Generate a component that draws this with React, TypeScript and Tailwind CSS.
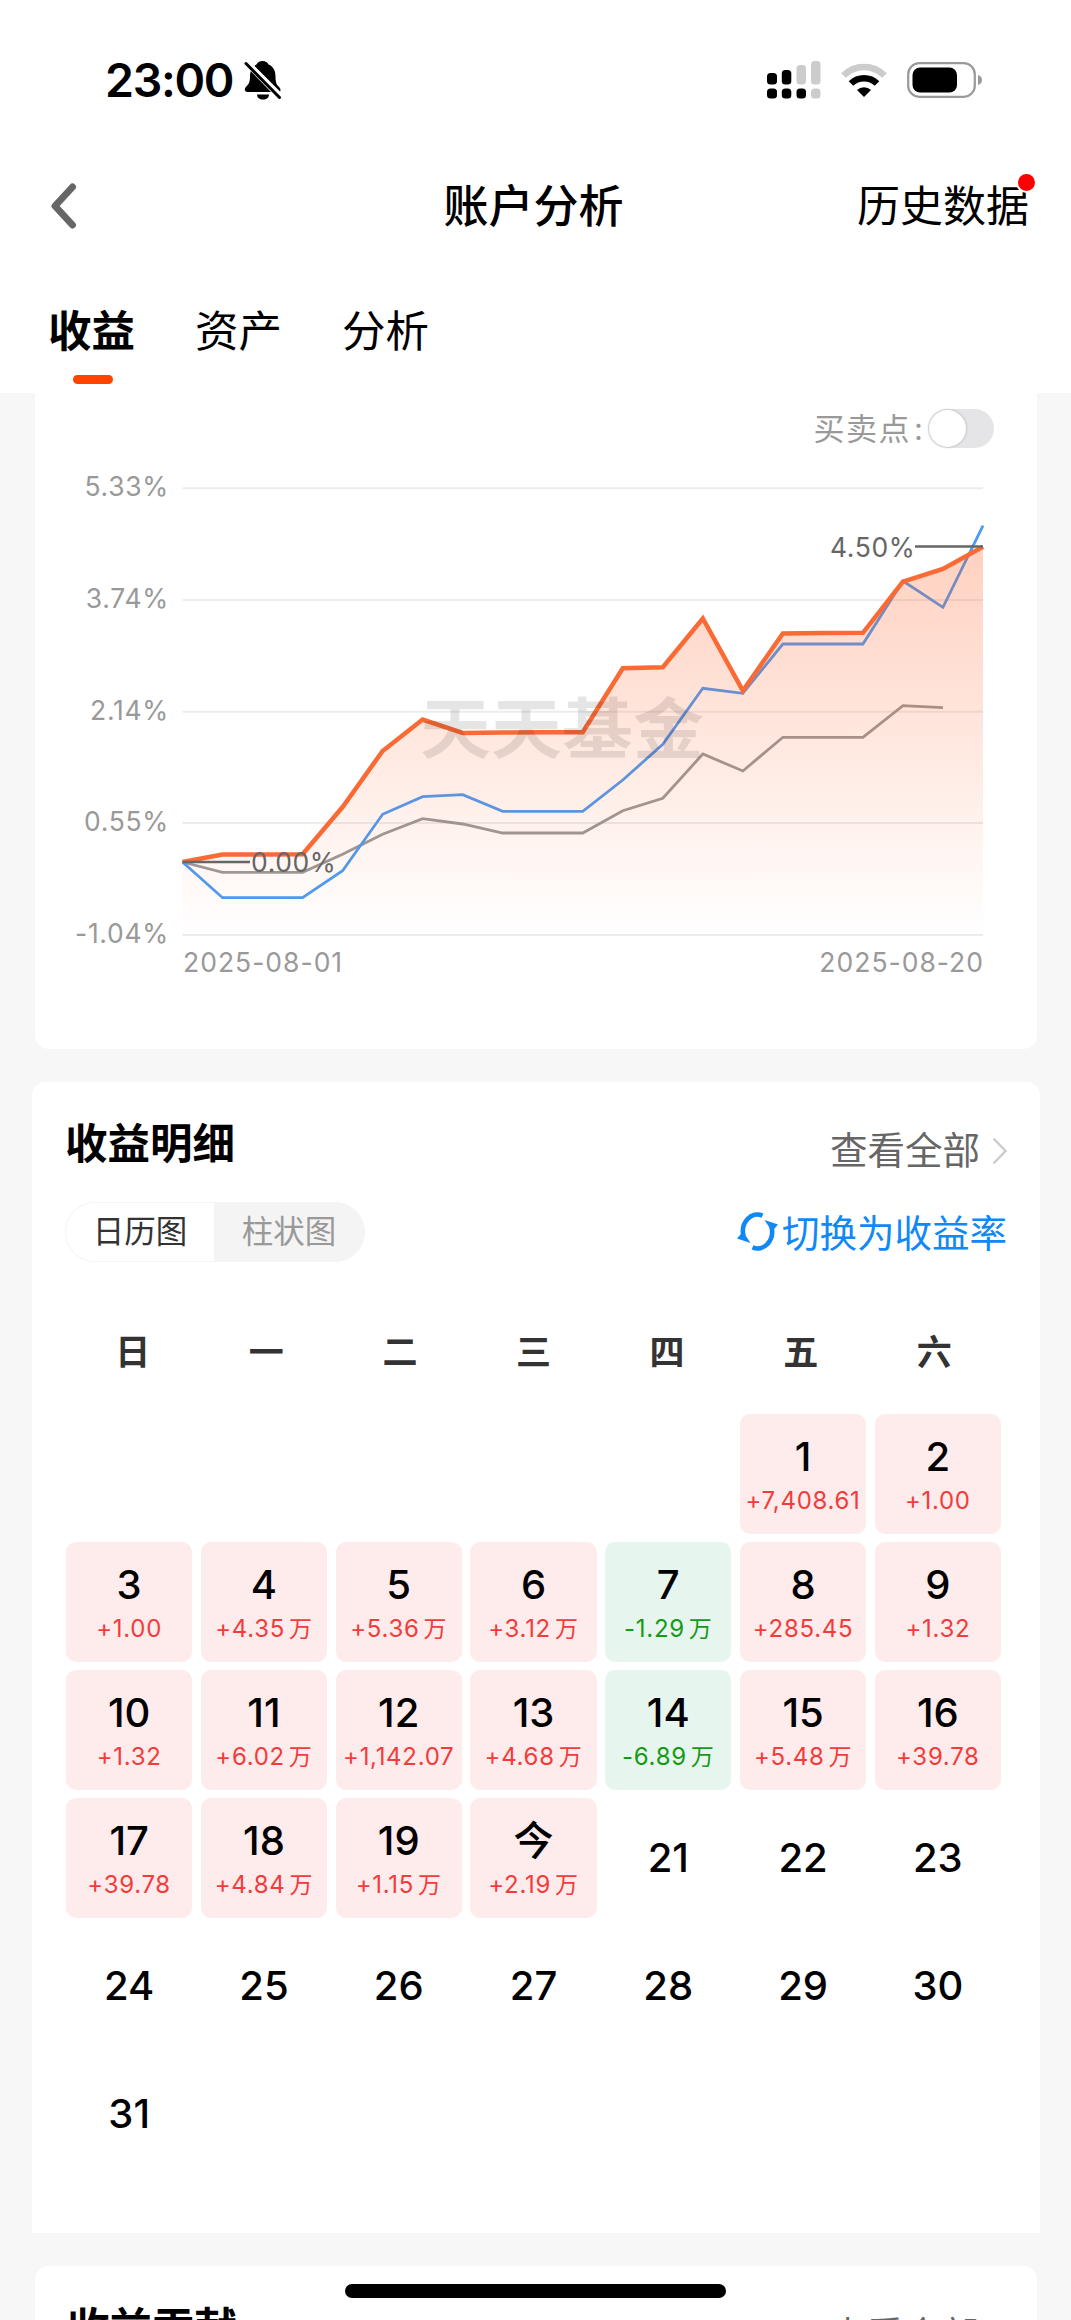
import React from 'react';
import clsx from 'clsx';

type Day = { label: string; amount?: string; unit?: string };

const weekdays = ['日', '一', '二', '三', '四', '五', '六'];

const days: Day[] = [
  { label: '1', amount: '+7,408.61' },
  { label: '2', amount: '+1.00' },
  { label: '3', amount: '+1.00' },
  { label: '4', amount: '+4.35', unit: '万' },
  { label: '5', amount: '+5.36', unit: '万' },
  { label: '6', amount: '+3.12', unit: '万' },
  { label: '7', amount: '-1.29', unit: '万' },
  { label: '8', amount: '+285.45' },
  { label: '9', amount: '+1.32' },
  { label: '10', amount: '+1.32' },
  { label: '11', amount: '+6.02', unit: '万' },
  { label: '12', amount: '+1,142.07' },
  { label: '13', amount: '+4.68', unit: '万' },
  { label: '14', amount: '-6.89', unit: '万' },
  { label: '15', amount: '+5.48', unit: '万' },
  { label: '16', amount: '+39.78' },
  { label: '17', amount: '+39.78' },
  { label: '18', amount: '+4.84', unit: '万' },
  { label: '19', amount: '+1.15', unit: '万' },
  { label: '今', amount: '+2.19', unit: '万' },
  ...['21', '22', '23', '24', '25', '26', '27', '28', '29', '30', '31'].map((label) => ({ label })),
];

// Chart geometry: one point every 40px, y grows downwards from the top grid line
const CHART_LEFT = 147.5;
const CHART_RIGHT = 948;
const STEP = 40.025;

const account = [394, 386.5, 386.5, 386.2, 339, 283, 251.5, 265, 264.5, 264.3, 264.3, 200.3, 199.3, 150.5, 222.7, 165.5, 165, 164.8, 113.7, 101, 78.7];
const index = [394, 429.7, 429.7, 429.7, 402.7, 346.3, 328.7, 326.7, 343.3, 343.3, 343.3, 312, 276.3, 220.3, 225.3, 176, 176, 176, 113, 139.3, 57.7];
const average = [394, 404.3, 404.3, 404.3, 386.3, 366.3, 350.7, 356, 365, 365, 365, 342.7, 330.3, 286, 303, 269.3, 269.3, 269.3, 237.7, 239.7];

const gridLines = [
  { y: 20.3, label: '5.33%' },
  { y: 132, label: '3.74%' },
  { y: 243.7, label: '2.14%' },
  { y: 355, label: '0.55%' },
  { y: 467, label: '-1.04%' },
];

const toPoints = (values: number[]) => values.map((y, i) => `${CHART_LEFT + i * STEP},${y}`).join(' ');

const StatusBar: React.FC = () => (
  <div className="flex h-[160px] items-center justify-between pl-[105px] pr-[88px]">
    <div className="flex items-center">
      <span className="text-[46.5px] font-semibold leading-none tracking-[-1.3px]">23:00</span>
      <svg className="ml-[11px] h-10 w-[38px]" viewBox="0 0 38 40">
        <path
          d="M18.5 1c3 0 5 1.500 6 3.500 5 2 7 6.500 7 12 0 7 1.500 8.500 4 11 1.500 1.500 1.500 4.500-1 4.500H3.500c-2.500 0-3.500-2.500-2-4.500 3-3.500 4.500-4.500 4.500-11 0-5.500 2.500-10 6.500-12C13.500 2.500 15.500 1 18.500 1Z"
          fill="#000"
        />
        <path d="M13 34.500h12c0 3-2.500 5-6 5s-6-2-6-5Z" fill="#000" />
        <path d="M3.500 1.500 38 36" stroke="#fff" strokeWidth="3.500" />
        <path d="M0 0 37 38" stroke="#fff" strokeWidth="6" />
        <path d="M2 3.500 35.500 37.500" stroke="#000" strokeWidth="3" strokeLinecap="round" />
      </svg>
    </div>
    <div className="flex items-center">
      <svg className="h-[38px] w-[54px]" viewBox="0 0 54 38">
        <rect x="0" y="12" width="10" height="11.500" rx="3.500" />
        <rect x="14.800" y="9" width="9.500" height="14.500" rx="3.500" />
        <rect x="29.500" y="4" width="9.500" height="19.500" rx="3.500" fill="#ccc" />
        <rect x="44" y="0" width="9.500" height="23.500" rx="3.500" fill="#ccc" />
        <rect x="0" y="27.500" width="10" height="10" rx="3.500" />
        <rect x="14.800" y="27.500" width="9.500" height="10" rx="3.500" />
        <rect x="29.500" y="27.500" width="9.500" height="10" rx="3.500" />
        <rect x="44" y="27.500" width="9.500" height="10" rx="3.500" fill="#ccc" />
      </svg>
      <svg className="ml-5 h-[34px] w-[46px]" viewBox="0 0 46 34">
        <path d="M2.500 12.500a29 29 0 0 1 41 0" fill="none" stroke="#ccc" strokeWidth="6.500" />
        <path d="M10 20.500a18.500 18.500 0 0 1 26 0" fill="none" stroke="#000" strokeWidth="6.500" />
        <path d="M23 34l-7-7a10 10 0 0 1 14 0Z" />
      </svg>
      <svg className="ml-5 h-9 w-[76px]" viewBox="0 0 76 36">
        <rect x="1.200" y="1.200" width="66.600" height="33.600" rx="11" fill="none" stroke="#999" strokeWidth="2.200" />
        <rect x="5.500" y="5.500" width="44.500" height="25" rx="7.500" />
        <path d="M71 13c2.500.5 4 2.500 4 5s-1.500 4.500-4 5Z" fill="#999" />
      </svg>
    </div>
  </div>
);

const NavBar: React.FC = () => (
  <div className="grid h-[92px] grid-cols-3 items-center pl-[38px] pr-[42px]">
    <svg className="ml-3 h-[46px] w-[27px]" viewBox="0 0 27 46" fill="none">
      <path d="M22.500 4 5 23l17.500 19" stroke="#666" strokeWidth="7" strokeLinecap="round" strokeLinejoin="round" />
    </svg>
    <h1 className="pt-px text-center text-[45px] font-medium leading-none">账户分析</h1>
    <div className="relative justify-self-end text-[43px] leading-none">
      历史数据
      <span className="absolute -right-[6px] -top-[11px] size-[17px] rounded-full bg-[#ff0000] ring-2 ring-white" />
    </div>
  </div>
);

const Tabs: React.FC = () => (
  <div className="flex gap-[60px] px-12 pt-[58px] text-[43.5px] leading-none">
    <div className="flex flex-col items-center font-bold">
      收益
      <span className="ml-[3px] mt-[21px] h-[9px] w-10 rounded-full bg-[#ff4400]" />
    </div>
    <div>资产</div>
    <div>分析</div>
  </div>
);

const ProfitChart: React.FC = () => (
  <svg className="block h-[520px] w-[1002px]" viewBox="0 0 1002 520" fontFamily='Inter, "Noto Sans CJK SC", sans-serif'>
    <defs>
      <linearGradient id="accountFill" gradientUnits="userSpaceOnUse" x1="0" y1="78" x2="0" y2="467">
        <stop offset="0%" stopColor="#ff5a1e" stopOpacity="0.28" />
        <stop offset="100%" stopColor="#ff5a1e" stopOpacity="0" />
      </linearGradient>
    </defs>

    {gridLines.map(({ y, label }) => (
      <g key={label}>
        <line x1={CHART_LEFT} x2={CHART_RIGHT} y1={y} y2={y} stroke="#ececec" strokeWidth="2" />
        <text x="134" y={y + 8} textAnchor="end" fontSize="26.5" letterSpacing="0.700" fill="#999">
          {label}
        </text>
      </g>
    ))}
    <text x="148" y="504" fontSize="26.5" letterSpacing="1" fill="#999">2025-08-01</text>
    <text x="949" y="504" textAnchor="end" fontSize="26.5" letterSpacing="1" fill="#999">2025-08-20</text>

    <polyline points={toPoints(average)} fill="none" stroke="#999" strokeWidth="2.800" />
    <polyline points={toPoints(index)} fill="none" stroke="#4a9bf5" strokeWidth="2.800" />
    <polygon points={`${toPoints(account)} ${CHART_RIGHT},467 ${CHART_LEFT},467`} fill="url(#accountFill)" />
    <polyline points={toPoints(account)} fill="none" stroke="#fa6a35" strokeWidth="4.500" />

    <text transform="translate(385 285) scale(1 0.930)" fontSize="71" fontWeight="700" fill="#000" fillOpacity="0.1">
      天天基金
    </text>

    <line x1={CHART_LEFT} x2="215" y1="394" y2="394" stroke="#666" strokeWidth="2.500" />
    <text x="216" y="404" fontSize="26.5" letterSpacing="0.6" fill="#666">0.00%</text>
    <text x="795" y="88.500" fontSize="26.5" letterSpacing="0.6" fill="#666">4.50%</text>
    <line x1="880" x2={CHART_RIGHT} y1="78.500" y2="78.500" stroke="#666" strokeWidth="2.500" />
  </svg>
);

const DayCell: React.FC<{ day: Day }> = ({ day }) => {
  const loss = day.amount?.startsWith('-');
  return (
    <div
      className={clsx(
        'flex h-[120px] flex-col items-center rounded-[10px]',
        !day.amount && 'justify-center',
        day.amount && (loss ? 'bg-[#e6f6ee]' : 'bg-[#feebeb]'),
        day.amount && 'pt-[23px]'
      )}
    >
      <span className="text-[40px] font-medium leading-10">{day.label}</span>
      {day.amount && (
        <span
          className={clsx(
            'mt-3 flex items-center whitespace-nowrap text-[24px] leading-6 tracking-[0.700px]',
            loss ? 'text-[#159a15]' : 'text-[#f23c3c]'
          )}
        >
          {day.amount}
          {day.unit && <span className="ml-1 text-[23px]">{day.unit}</span>}
        </span>
      )}
    </div>
  );
};

export default function App() {
  return (
    <div className='flex h-[2320px] w-[1071px] flex-col overflow-hidden bg-[#f7f7f7] font-[Inter,"Noto_Sans_CJK_SC",sans-serif] text-black'>
      <header className="h-[393px] shrink-0 bg-white">
        <StatusBar />
        <NavBar />
        <Tabs />
      </header>

      <section className="ml-[35px] h-[656px] w-[1002px] shrink-0 rounded-b-[14px] bg-white">
        <div className="flex h-[75px] items-center justify-end pb-1 pr-[43px]">
          <span className="text-[31px] leading-none tracking-[1.500px] text-[#999]">买卖点</span>
          <span className="ml-[3px] text-[31px] leading-none text-[#999]">:</span>
          <span className="ml-[5px] flex h-[39px] w-[66px] items-center rounded-full bg-[#e5e5e7] p-px">
            <span className="size-[37px] rounded-full bg-white shadow-[0_0_3px_rgba(0,0,0,0.25)]" />
          </span>
        </div>
        <ProfitChart />
      </section>

      <section className="ml-8 mt-[33px] h-[1151px] w-[1008px] shrink-0 rounded-t-[14px] bg-white pl-[34px] pr-[33px]">
        <div className="flex h-[87px] items-center justify-between pt-10">
          <h2 className="-ml-px pb-[3px] text-[42.500px] font-bold leading-none">收益明细</h2>
          <div className="mt-[10px] flex items-center text-[37.500px] leading-none text-[#666]">
            查看全部
            <svg className="ml-3 h-7 w-[15px]" viewBox="0 0 15 28" fill="none">
              <path d="M1.500 1.500 13.500 14 1.500 26.500" stroke="#ccc" strokeWidth="2.500" />
            </svg>
          </div>
        </div>

        <div className="mt-[33px] flex h-[60px] items-center justify-between">
          <div className="-ml-px flex h-[60px] w-[300px] overflow-hidden rounded-full border border-[#f4f4f4] bg-[#f4f4f4] text-[31.500px]">
            <span className="flex w-[148px] items-center justify-center bg-white text-[#333]">日历图</span>
            <span className="flex flex-1 items-center justify-center text-[#999]">柱状图</span>
          </div>
          <div className="flex items-center pt-1 text-[37.500px] leading-none text-[#1088f5]">
            <svg className="mb-[4px] mr-[4px] h-10 w-[41px]" viewBox="0 0 41 40" fill="none">
              <path d="M25.500 3.600A14.500 16.800 0 0 0 6.500 24" stroke="#1088f5" strokeWidth="4.600" />
              <path d="M15.500 35.400A14.500 16.800 0 0 0 34.500 15" stroke="#1088f5" strokeWidth="4.600" />
              <path d="M0 26.500 6 19.500l7.500 11.500Z" fill="#1088f5" />
              <path d="M27.500 8 41 12.500 35 19.500Z" fill="#1088f5" />
            </svg>
            切换为收益率
          </div>
        </div>

        <div className="mt-[70px] grid h-10 w-[935px] grid-cols-7 text-center text-[35px] font-bold leading-10 text-[#333]">
          {weekdays.map((name) => (
            <span key={name}>{name}</span>
          ))}
        </div>

        <div className="mt-[42px] grid w-[935px] grid-cols-7 gap-x-[8.500px] gap-y-2">
          {days.map((day, i) => (
            <div key={day.label} className={i === 0 ? 'col-start-6' : undefined}>
              <DayCell day={day} />
            </div>
          ))}
        </div>
      </section>

      <section className="ml-[35px] mt-[33px] flex h-[120px] w-[1002px] shrink-0 justify-between rounded-t-[14px] bg-white pl-8 pr-[58px] pt-[41px]">
        <h2 className="text-[42.500px] font-bold leading-none">收益贡献</h2>
        <span className="mt-[10px] text-[37.500px] leading-none text-[#666]">查看全部</span>
      </section>

      {/* Home indicator */}
      <div className="fixed left-[345px] top-[2284px] h-[14px] w-[381px] rounded-full bg-black" />
    </div>
  );
}
